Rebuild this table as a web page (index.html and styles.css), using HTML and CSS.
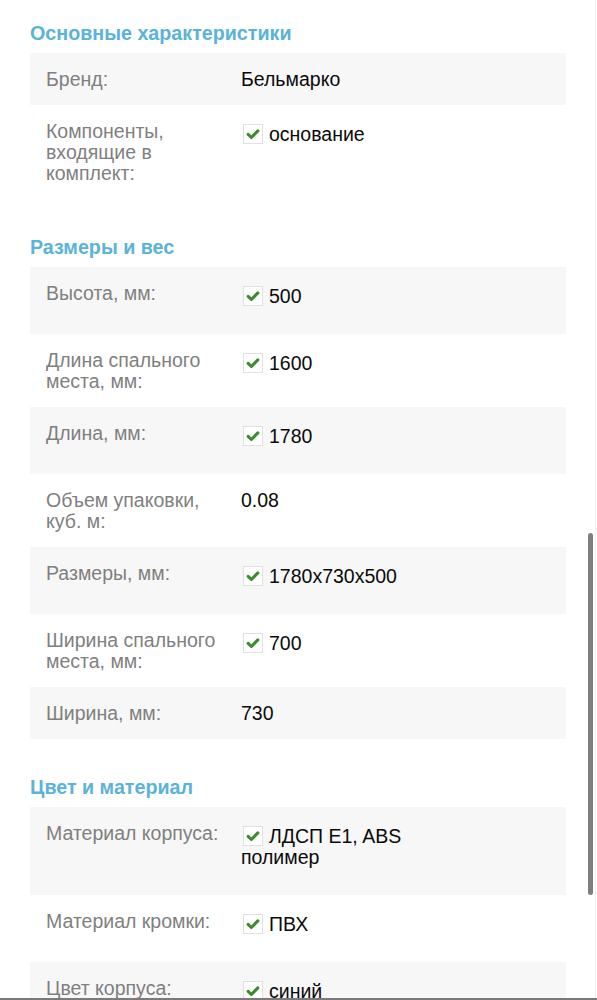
FILE: index.html
```html
<!DOCTYPE html>
<html lang="ru">
<head>
<meta charset="utf-8">
<title>Характеристики</title>
<link rel="stylesheet" href="styles.css">
</head>
<body>
<svg width="0" height="0" class="defs">
  <symbol id="chk" viewBox="0 0 20 20">
    <path d="M4.6 10.4 L8.2 13.9 L15.4 6.5" fill="none" stroke="#3b8a2c" stroke-width="3.4" stroke-linecap="round" stroke-linejoin="round"/>
  </symbol>
</svg>
<main class="specs">
  <section class="group">
    <h2 class="group-title">Основные характеристики</h2>
    <div class="row"><div class="label">Бренд:</div><div class="value">Бельмарко</div></div>
    <div class="row"><div class="label">Компоненты, входящие в комплект:</div><div class="value checked"><span class="box"><svg><use href="#chk"/></svg></span>основание</div></div>
  </section>
  <section class="group">
    <h2 class="group-title">Размеры и вес</h2>
    <div class="row"><div class="label">Высота, мм:</div><div class="value checked"><span class="box"><svg><use href="#chk"/></svg></span>500</div></div>
    <div class="row"><div class="label">Длина спального места, мм:</div><div class="value checked"><span class="box"><svg><use href="#chk"/></svg></span>1600</div></div>
    <div class="row"><div class="label">Длина, мм:</div><div class="value checked"><span class="box"><svg><use href="#chk"/></svg></span>1780</div></div>
    <div class="row"><div class="label">Объем упаковки, куб. м:</div><div class="value">0.08</div></div>
    <div class="row"><div class="label">Размеры, мм:</div><div class="value checked"><span class="box"><svg><use href="#chk"/></svg></span>1780x730x500</div></div>
    <div class="row"><div class="label">Ширина спального места, мм:</div><div class="value checked"><span class="box"><svg><use href="#chk"/></svg></span>700</div></div>
    <div class="row"><div class="label">Ширина, мм:</div><div class="value">730</div></div>
  </section>
  <section class="group">
    <h2 class="group-title">Цвет и материал</h2>
    <div class="row"><div class="label">Материал корпуса:</div><div class="value checked"><span class="box"><svg><use href="#chk"/></svg></span>ЛДСП E1, ABS полимер</div></div>
    <div class="row"><div class="label">Материал кромки:</div><div class="value checked"><span class="box"><svg><use href="#chk"/></svg></span>ПВХ</div></div>
    <div class="row"><div class="label">Цвет корпуса:</div><div class="value checked"><span class="box"><svg><use href="#chk"/></svg></span>синий</div></div>
  </section>
</main>
<div class="scroll-track"></div>
<div class="scroll-thumb"></div>
<div class="bottom-edge"></div>
</body>
</html>
```

FILE: styles.css
```css
html, body {
  margin: 0;
  padding: 0;
  overflow: hidden;
  height: 1000px;
  background: #ffffff;
}

body {
  font-family: "Liberation Sans", Arial, sans-serif;
  font-size: 19.5px;
  color: #111111;
}

.defs {
  position: absolute;
  width: 0;
  height: 0;
}

.specs {
  padding: 21px 31px 0 30px;
}

.group {
  margin-bottom: 36px;
}

.group-title {
  margin: 0 0 8px 0;
  font-size: 19.7px;
  line-height: 24px;
  font-weight: 700;
  color: #5ab3d8;
}

.row {
  display: grid;
  grid-template-columns: 195px 1fr;
  line-height: 21px;
}

.row:nth-of-type(odd) {
  background: #f7f7f7;
}

.label {
  padding: 16px 0 15px 16px;
  color: #7f7f7f;
}

.value {
  padding: 16px 16px 15px 16px;
  max-width: 225px;
  color: #0a0a0a;
}

.value.checked {
  padding-top: 19px;
  padding-bottom: 27px;
}

.box {
  display: inline-block;
  width: 20px;
  height: 20px;
  margin: -3px 6px 0 2px;
  border: 1px solid #e0e0e0;
  background: #ffffff;
  vertical-align: -3px;
  box-sizing: border-box;
}

.box svg {
  display: block;
  width: 18px;
  height: 18px;
}

.scroll-track {
  position: fixed;
  top: 0;
  right: 1px;
  width: 1px;
  height: 1000px;
  background: #f1f1f1;
}

.scroll-thumb {
  position: fixed;
  top: 533px;
  right: 4px;
  width: 5px;
  height: 362px;
  border-radius: 3px;
  background: #7f7f7f;
}

.bottom-edge {
  position: fixed;
  left: 0;
  right: 0;
  bottom: 0;
  height: 2px;
  background: #7a7a7a;
}
```
